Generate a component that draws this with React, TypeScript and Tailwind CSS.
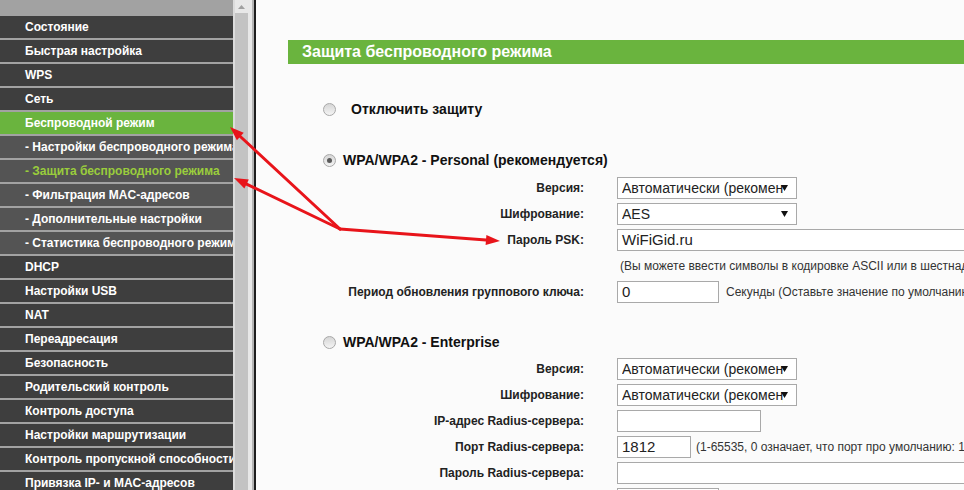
import React from "react";

type MenuItem = { label: string; kind: "main" | "sub" | "active" | "subActive" };

const menu: MenuItem[] = [
  { label: "Состояние", kind: "main" },
  { label: "Быстрая настройка", kind: "main" },
  { label: "WPS", kind: "main" },
  { label: "Сеть", kind: "main" },
  { label: "Беспроводной режим", kind: "active" },
  { label: "- Настройки беспроводного режима", kind: "sub" },
  { label: "- Защита беспроводного режима", kind: "subActive" },
  { label: "- Фильтрация MAC-адресов", kind: "sub" },
  { label: "- Дополнительные настройки", kind: "sub" },
  { label: "- Статистика беспроводного режима", kind: "sub" },
  { label: "DHCP", kind: "main" },
  { label: "Настройки USB", kind: "main" },
  { label: "NAT", kind: "main" },
  { label: "Переадресация", kind: "main" },
  { label: "Безопасность", kind: "main" },
  { label: "Родительский контроль", kind: "main" },
  { label: "Контроль доступа", kind: "main" },
  { label: "Настройки маршрутизации", kind: "main" },
  { label: "Контроль пропускной способности", kind: "main" },
  { label: "Привязка IP- и MAC-адресов", kind: "main" },
  { label: "Динамический DNS", kind: "main" },
];

function rowClass(kind: MenuItem["kind"]) {
  switch (kind) {
    case "active":
      return "bg-[#6ab43e] text-white";
    case "sub":
      return "bg-[#545454] text-white";
    case "subActive":
      return "bg-[#545454] text-[#9acd3c]";
    default:
      return "bg-[#3e3e3e] text-white";
  }
}

function Radio({ checked }: { checked?: boolean }) {
  return (
    <div className="w-[13px] h-[13px] rounded-full border border-[#a8a8a8] bg-gradient-to-b from-[#d6d6d6] to-[#f4f4f4] flex items-center justify-center shrink-0">
      {checked && <div className="w-[5px] h-[5px] rounded-full bg-[#5a5a5a]" />}
    </div>
  );
}

function Select({ value }: { value: string }) {
  return (
    <div className="relative w-[180px] h-[22px] shrink-0 border border-[#a9a9a9] bg-white pl-[4px] text-[14px] leading-[20px] text-[#222]">
      <div className="w-[161px] overflow-hidden whitespace-nowrap">{value}</div>
      <svg className="absolute right-[8px] top-[7px]" width="7" height="6" viewBox="0 0 7 6">
        <polygon points="0,0 7,0 3.5,6" fill="#111" />
      </svg>
    </div>
  );
}

function Input({ w, value }: { w: string; value?: string }) {
  return (
    <div className={`${w} h-[22px] border border-[#a9a9a9] bg-white pl-[4px] text-[15px] leading-[20px] text-[#222] shrink-0`}>
      {value}
    </div>
  );
}

function Row({ label, children }: { label: string; children?: React.ReactNode }) {
  return (
    <div className="flex items-center h-[22px]">
      <div className="w-[328px] shrink-0 text-right text-[12px] font-bold text-[#222] whitespace-nowrap">{label}</div>
      <div className="ml-[33px] flex items-center whitespace-nowrap shrink-0">{children}</div>
    </div>
  );
}

export default function App() {
  return (
    <div className="relative w-[964px] h-[490px] overflow-hidden flex bg-[#fbfbfb] font-['Liberation_Sans',Arial,sans-serif]">
      {/* Sidebar */}
      <aside className="w-[233px] shrink-0 bg-[#a2a2a2] pt-[16px] flex flex-col gap-[2px] overflow-hidden">
        {menu.map((m) => (
          <div
            key={m.label}
            className={`h-[22px] shrink-0 pl-[25px] text-[12px] font-bold leading-[22px] whitespace-nowrap overflow-hidden ${rowClass(m.kind)}`}
          >
            {m.label}
          </div>
        ))}
      </aside>

      {/* Scrollbar */}
      <div className="w-[2px] shrink-0 bg-[#dcdcdc]" />
      <div className="w-[13px] shrink-0 bg-[#c3c3c3] flex flex-col">
        <div className="h-[13px] bg-[#e8e8e8] flex items-center justify-center">
          <svg width="7" height="4" viewBox="0 0 7 4">
            <polygon points="0,4 7,4 3.5,0" fill="#a0a0a0" />
          </svg>
        </div>
      </div>
      <div className="w-[4px] shrink-0 bg-[#e8e8e8]" />
      <div className="w-[2px] shrink-0 bg-[#b4b4b4]" />
      <div className="w-[2px] shrink-0 bg-[#1e1e1e]" />

      {/* Content */}
      <main className="flex-1 min-w-0 flex flex-col overflow-hidden">
        <div className="ml-[32px] mt-[40px] h-[24px] bg-[#6ab43e] pl-[14px] text-[16px] font-bold leading-[24px] text-white whitespace-nowrap">
          Защита беспроводного режима
        </div>
        <div className="ml-[32px] mt-[26px] h-px bg-[#3f7a56]" />

        <div className="mt-[9px] h-[20px] flex items-center pl-[67px]">
          <Radio />
          <span className="ml-[15px] text-[14px] font-bold text-[#111]">Отключить защиту</span>
        </div>

        <div className="mt-[31px] h-[20px] flex items-center pl-[67px]">
          <Radio checked />
          <span className="ml-[7px] text-[14px] font-bold text-[#111] whitespace-nowrap">WPA/WPA2 - Personal (рекомендуется)</span>
        </div>

        <div className="mt-[7px] flex flex-col gap-[4px]">
          <Row label="Версия:">
            <Select value="Автоматически (рекомендуется)" />
          </Row>
          <Row label="Шифрование:">
            <Select value="AES" />
          </Row>
          <Row label="Пароль PSK:">
            <Input w="w-[420px]" value="WiFiGid.ru" />
          </Row>
          <Row label="">
            <span className="pl-[3px] text-[12px] text-[#333]">
              (Вы можете ввести символы в кодировке ASCII или в шестнадцатеричном формате)
            </span>
          </Row>
          <Row label="Период обновления группового ключа:">
            <Input w="w-[102px]" value="0" />
            <span className="ml-[7px] text-[12px] text-[#333]">Секунды (Оставьте значение по умолчанию, если не уверены)</span>
          </Row>
        </div>

        <div className="mt-[29px] h-[20px] flex items-center pl-[67px]">
          <Radio />
          <span className="ml-[7px] text-[14px] font-bold text-[#111]">WPA/WPA2 - Enterprise</span>
        </div>

        <div className="mt-[6px] flex flex-col gap-[4px]">
          <Row label="Версия:">
            <Select value="Автоматически (рекомендуется)" />
          </Row>
          <Row label="Шифрование:">
            <Select value="Автоматически (рекомендуется)" />
          </Row>
          <Row label="IP-адрес Radius-сервера:">
            <Input w="w-[144px]" />
          </Row>
          <Row label="Порт Radius-сервера:">
            <Input w="w-[74px]" value="1812" />
            <span className="ml-[5px] text-[12px] text-[#333]">(1-65535, 0 означает, что порт про умолчанию: 1812)</span>
          </Row>
          <Row label="Пароль Radius-сервера:">
            <Input w="w-[420px]" />
          </Row>
          <Row label="">
            <Input w="w-[102px]" />
          </Row>
        </div>
      </main>

      {/* Annotation arrows */}
      <svg className="absolute left-0 top-0 pointer-events-none" width="964" height="490" viewBox="0 0 964 490">
        <g stroke="#e8141a" strokeWidth="3" strokeLinecap="round">
          <line x1="340" y1="229" x2="240.3" y2="136.5" />
          <line x1="340" y1="229" x2="246.6" y2="184.1" />
          <line x1="340" y1="229" x2="486" y2="240" />
        </g>
        <g fill="#e8141a">
          <polygon points="230,127 243.7,132.8 236.9,140.2" />
          <polygon points="234,178 248.8,179.6 244.4,188.6" />
          <polygon points="500,241 485.6,244.9 486.4,235" />
        </g>
      </svg>
    </div>
  );
}
